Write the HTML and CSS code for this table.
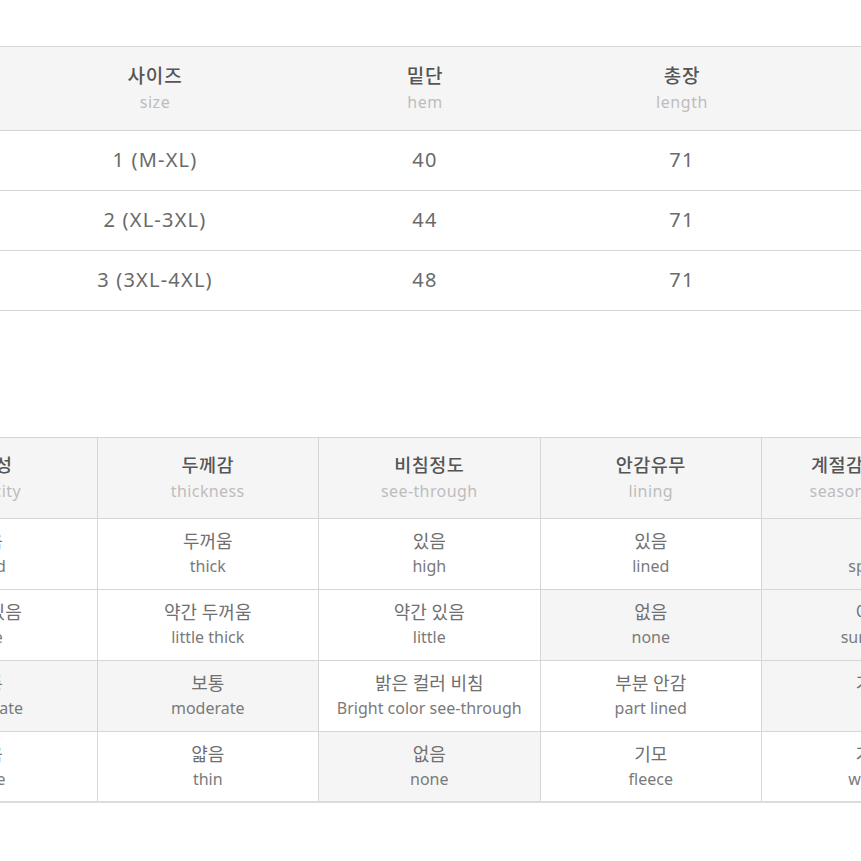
FILE: index.html
```html
<!DOCTYPE html>
<html lang="ko">
<head>
<meta charset="utf-8">
<title>Size table</title>
<link rel="stylesheet" href="styles.css">
</head>
<body>
<div class="page">
  <div class="size-table">
    <div class="srow shead">
      <div class="scell"><span class="ko">사이즈</span><span class="en">size</span></div>
      <div class="scell"><span class="ko">밑단</span><span class="en">hem</span></div>
      <div class="scell"><span class="ko">총장</span><span class="en">length</span></div>
      <div class="scell"></div>
    </div>
    <div class="srow">
      <div class="scell val">1 (M-XL)</div>
      <div class="scell val">40</div>
      <div class="scell val">71</div>
      <div class="scell val"></div>
    </div>
    <div class="srow">
      <div class="scell val">2 (XL-3XL)</div>
      <div class="scell val">44</div>
      <div class="scell val">71</div>
      <div class="scell val"></div>
    </div>
    <div class="srow">
      <div class="scell val">3 (3XL-4XL)</div>
      <div class="scell val">48</div>
      <div class="scell val">71</div>
      <div class="scell val"></div>
    </div>
  </div>

  <div class="info-table">
    <div class="irow ihead">
      <div class="icell"><span class="ko">신축성</span><span class="en">elasticity</span></div>
      <div class="icell"><span class="ko">두께감</span><span class="en">thickness</span></div>
      <div class="icell"><span class="ko">비침정도</span><span class="en">see-through</span></div>
      <div class="icell"><span class="ko">안감유무</span><span class="en">lining</span></div>
      <div class="icell season"><span class="ko">계절감</span><span class="en">season</span></div>
    </div>
    <div class="irow">
      <div class="icell"><span class="ko">좋음</span><span class="en">good</span></div>
      <div class="icell"><span class="ko">두꺼움</span><span class="en">thick</span></div>
      <div class="icell"><span class="ko">있음</span><span class="en">high</span></div>
      <div class="icell"><span class="ko">있음</span><span class="en">lined</span></div>
      <div class="icell on"><span class="ko">봄</span><span class="en">spring</span></div>
    </div>
    <div class="irow">
      <div class="icell"><span class="ko">약간 있음</span><span class="en">little</span></div>
      <div class="icell"><span class="ko">약간 두꺼움</span><span class="en">little thick</span></div>
      <div class="icell"><span class="ko">약간 있음</span><span class="en">little</span></div>
      <div class="icell on"><span class="ko">없음</span><span class="en">none</span></div>
      <div class="icell on"><span class="ko">여름</span><span class="en">summer</span></div>
    </div>
    <div class="irow">
      <div class="icell on"><span class="ko">보통</span><span class="en">moderate</span></div>
      <div class="icell on"><span class="ko">보통</span><span class="en">moderate</span></div>
      <div class="icell"><span class="ko">밝은 컬러 비침</span><span class="en">Bright color see-through</span></div>
      <div class="icell"><span class="ko">부분 안감</span><span class="en">part lined</span></div>
      <div class="icell on"><span class="ko">가을</span><span class="en">fall</span></div>
    </div>
    <div class="irow last">
      <div class="icell"><span class="ko">없음</span><span class="en">none</span></div>
      <div class="icell"><span class="ko">얇음</span><span class="en">thin</span></div>
      <div class="icell on"><span class="ko">없음</span><span class="en">none</span></div>
      <div class="icell"><span class="ko">기모</span><span class="en">fleece</span></div>
      <div class="icell"><span class="ko">겨울</span><span class="en">winter</span></div>
    </div>
  </div>
</div>
</body>
</html>
```

FILE: styles.css
```css
* { box-sizing: border-box; }
html, body {
  margin: 0;
  padding: 0;
  background: #ffffff;
  overflow: hidden;
}
body {
  font-family: "Noto Sans", "Noto Sans CJK KR", sans-serif;
  color: #666666;
}
.page {
  width: 861px;
  height: 861px;
  overflow: hidden;
  padding-top: 46px;
}

/* size table */
.size-table {
  width: 861px;
  border-top: 1px solid #d6d6d6;
}
.srow {
  display: grid;
  grid-template-columns: 310px 230px 284px 1fr;
  height: 60px;
  border-bottom: 1px solid #d6d6d6;
}
.srow.shead {
  height: 84px;
  background: #f5f5f5;
}
.scell {
  display: flex;
  flex-direction: column;
  align-items: center;
  justify-content: center;
}
.shead .ko {
  font-size: 19px;
  line-height: 26px;
  color: #555555;
  font-weight: 500;
  letter-spacing: 0.8px;
}
.shead .en {
  font-size: 16px;
  line-height: 26px;
  color: #bdbdbd;
  letter-spacing: 0.6px;
}
.scell.val {
  font-size: 20px;
  color: #6a6a6a;
  letter-spacing: 1.2px;
  padding-bottom: 2px;
}

/* info table */
.info-table {
  margin-top: 126px;
  margin-left: -124px;
  width: 1108px;
  border-top: 1px solid #d6d6d6;
}
.irow {
  display: grid;
  grid-template-columns: repeat(5, 221.5px);
  height: 71px;
  border-bottom: 1px solid #d6d6d6;
}
.irow.ihead {
  height: 81px;
  background: #f5f5f5;
}
.irow.last {
  height: 71px;
  border-bottom: 2px solid #dcdcdc;
}
.icell {
  display: flex;
  flex-direction: column;
  align-items: center;
  justify-content: center;
  border-right: 1px solid #d6d6d6;
}
.icell.on {
  background: #f5f5f5;
}
.icell.season {
  padding-right: 70px;
}
.icell .ko {
  font-size: 18px;
  line-height: 25px;
  color: #707070;
}
.icell .en {
  font-size: 16px;
  line-height: 25px;
  color: #7a7a7a;
}
.ihead .icell .ko {
  color: #555555;
  font-weight: 500;
  line-height: 26px;
  font-size: 18.5px;
  letter-spacing: 0.5px;
}
.ihead .icell .en {
  color: #bdbdbd;
  line-height: 26px;
  letter-spacing: 0.4px;
}
```
